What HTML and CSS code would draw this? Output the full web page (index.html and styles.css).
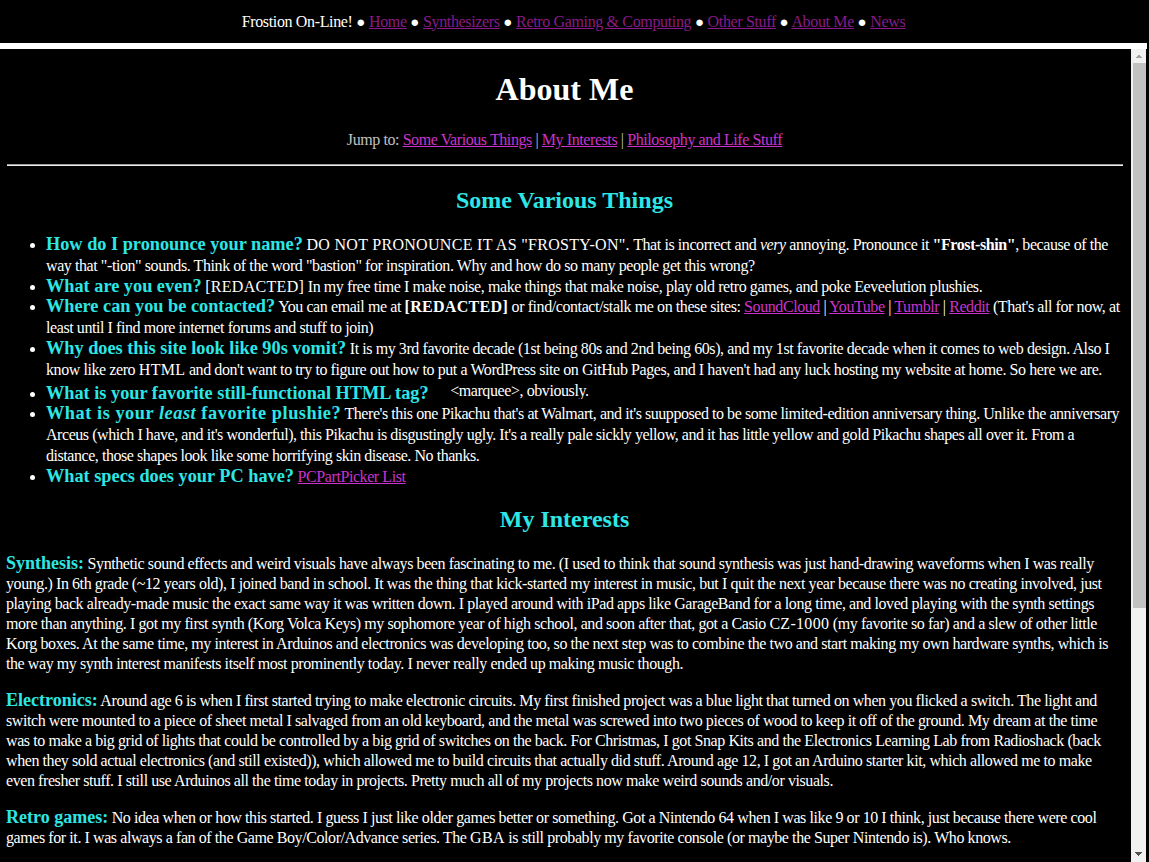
FILE: index.html
```html
<!DOCTYPE html>
<html>
<head>
<meta charset="utf-8">
<title>About Me - Frostion On-Line!</title>
<link rel="stylesheet" href="styles.css">
</head>
<body>
<div class="topbar">
  <div class="nav">Frostion On-Line! <span class="dot">●</span> <a href="#">Home</a> <span class="dot">●</span> <a href="#">Synthesizers</a> <span class="dot">●</span> <a href="#">Retro Gaming &amp; Computing</a> <span class="dot">●</span> <a href="#">Other Stuff</a> <span class="dot">●</span> <a href="#">About Me</a> <span class="dot">●</span> <a href="#">News</a></div>
</div>
<div class="frame">
  <div class="viewport">
    <div class="content">
      <h1 class="title">About Me</h1>
      <p class="jump">Jump to: <a href="#various">Some Various Things</a> | <a href="#interests">My Interests</a> | <a href="#philosophy">Philosophy and Life Stuff</a></p>
      <hr class="rule">
      <h2 class="section first" id="various">Some Various Things</h2>
      <ul class="faq">
        <li><b class="q">How do I pronounce your name?</b> <span class="caps">DO NOT PRONOUNCE IT AS "FROSTY-ON".</span> That is incorrect and <i>very</i> annoying. Pronounce it <b>"Frost-shin"</b>, because of the way that "-tion" sounds. Think of the word "bastion" for inspiration. Why and how do so many people get this wrong?</li>
        <li><b class="q">What are you even?</b> <span class="caps">[REDACTED]</span> In my free time I make noise, make things that make noise, play old retro games, and poke Eeveelution plushies.</li>
        <li><b class="q">Where can you be contacted?</b> You can email me at <b class="caps">[REDACTED]</b> or find/contact/stalk me on these sites: <a href="#">SoundCloud</a> | <a href="#">YouTube</a> | <a href="#">Tumblr</a> | <a href="#">Reddit</a> (That's all for now, at least until I find more internet forums and stuff to join)</li>
        <li><b class="q">Why does this site look like 90s vomit?</b> It is my 3rd favorite decade (1st being 80s and 2nd being 60s), and my 1st favorite decade when it comes to web design. Also I know like zero <span class="caps">HTML</span> and don't want to try to figure out how to put a WordPress site on GitHub Pages, and I haven't had any luck hosting my website at home. So here we are.</li>
        <li><b class="q">What is your favorite still-functional HTML tag?</b> <span class="marquee">&lt;marquee&gt;, obviously.</span></li>
        <li class="tight"><b class="q wide">What is your <i>least</i> favorite plushie?</b> There's this one Pikachu that's at Walmart, and it's suupposed to be some limited-edition anniversary thing. Unlike the anniversary Arceus (which I have, and it's wonderful), this Pikachu is disgustingly ugly. It's a really pale sickly yellow, and it has little yellow and gold Pikachu shapes all over it. From a distance, those shapes look like some horrifying skin disease. No thanks.</li>
        <li><b class="q">What specs does your PC have?</b> <a href="#">PCPartPicker List</a></li>
      </ul>
      <h2 class="section" id="interests">My Interests</h2>
      <p class="para"><b class="q">Synthesis:</b> Synthetic sound effects and weird visuals have always been fascinating to me. (I used to think that sound synthesis was just hand-drawing waveforms when I was really young.) In 6th grade (~12 years old), I joined band in school. It was the thing that kick-started my interest in music, but I quit the next year because there was no creating involved, just playing back already-made music the exact same way it was written down. I played around with iPad apps like GarageBand for a long time, and loved playing with the synth settings more than anything. I got my first synth (Korg Volca Keys) my sophomore year of high school, and soon after that, got a Casio <span class="caps">CZ-1000</span> (my favorite so far) and a slew of other little Korg boxes. At the same time, my interest in Arduinos and electronics was developing too, so the next step was to combine the two and start making my own hardware synths, which is the way my synth interest manifests itself most prominently today. I never really ended up making music though.</p>
      <p class="para"><b class="q">Electronics:</b> Around age 6 is when I first started trying to make electronic circuits. My first finished project was a blue light that turned on when you flicked a switch. The light and switch were mounted to a piece of sheet metal I salvaged from an old keyboard, and the metal was screwed into two pieces of wood to keep it off of the ground. My dream at the time was to make a big grid of lights that could be controlled by a big grid of switches on the back. For Christmas, I got Snap Kits and the Electronics Learning Lab from Radioshack (back when they sold actual electronics (and still existed)), which allowed me to build circuits that actually did stuff. Around age 12, I got an Arduino starter kit, which allowed me to make even fresher stuff. I still use Arduinos all the time today in projects. Pretty much all of my projects now make weird sounds and/or visuals.</p>
      <p class="para"><b class="q">Retro games:</b> No idea when or how this started. I guess I just like older games better or something. Got a Nintendo 64 when I was like 9 or 10 I think, just because there were cool games for it. I was always a fan of the Game Boy/Color/Advance series. The <span class="caps">GBA</span> is still probably my favorite console (or maybe the Super Nintendo is). Who knows.</p>
      <h2 class="section" id="philosophy">Philosophy and Life Stuff</h2>
    </div>
  </div>
  <div class="scrollbar">
    <div class="sb-btn sb-up"></div>
    <div class="sb-track"><div class="sb-thumb"></div></div>
    <div class="sb-btn sb-down"></div>
  </div>
</div>
</body>
</html>
```
FILE: styles.css
```css
html, body {
  margin: 0;
  padding: 0;
  background: #000;
  color: #fff;
  font-family: "Liberation Serif", "Times New Roman", serif;
  font-size: 16px;
  overflow: hidden;
}

.topbar {
  width: 1147px;
  height: 43px;
  display: flex;
  align-items: center;
  justify-content: center;
  border-bottom: 6px solid #fff;
}

.nav {
  letter-spacing: -0.35px;
}

.nav a {
  color: #8a1a8a;
}

.dot {
  font-size: 15px;
  letter-spacing: 0;
  color: #fff;
}

.frame {
  width: 1146px;
  height: 813px;
  display: flex;
}

.viewport {
  flex: 1;
  overflow: hidden;
}

.content {
  padding: 0 8px 0 6px;
  line-height: 20px;
  letter-spacing: -0.42px;
}

.content a {
  color: #cc33cc;
}

.caps {
  letter-spacing: 0.3px;
}

.title {
  font-size: 32px;
  line-height: 37px;
  letter-spacing: 0;
  text-align: center;
  margin: 22px 0 22px;
}

.jump {
  text-align: center;
  color: #c0c0c0;
  margin: 0 0 14px;
}

.rule {
  margin: 0 0 0 1px;
  border: 0;
  border-top: 1px solid #9a9a9a;
  border-bottom: 1px solid #eee;
}

.section {
  color: #2ee6e6;
  font-size: 24px;
  line-height: 28px;
  letter-spacing: 0;
  text-align: center;
  margin: 17px 0 20px;
}

.section.first {
  margin: 20px 0 21px;
}

.q {
  color: #2ee6e6;
  font-size: 18px;
  letter-spacing: 0;
}

.faq {
  margin: 0;
  padding-left: 40px;
}

.faq li {
  line-height: 20.8px;
}

.faq .q {
  font-size: 18.3px;
  line-height: 16px;
}

.faq .tight {
  letter-spacing: -0.45px;
}

.faq .q.wide {
  letter-spacing: 0.55px;
}

.marquee {
  display: inline-block;
  width: 660px;
  height: 18px;
  line-height: 20px;
  overflow: hidden;
  white-space: nowrap;
  padding-left: 18px;
}

.para {
  margin: 0 0 16px;
}

.scrollbar {
  width: 15px;
  background: #f1f1f1;
  display: flex;
  flex-direction: column;
}

.sb-btn {
  height: 14px;
  background-repeat: no-repeat;
  background-size: 4px 4px;
}

.sb-up {
  background-image: linear-gradient(to top left, #a3a3a3 50%, transparent 50%),
                    linear-gradient(to top right, #a3a3a3 50%, transparent 50%);
  background-position: 4px 5px, 8px 5px;
}

.sb-down {
  height: 15px;
  background-image: linear-gradient(to bottom left, #505050 50%, transparent 50%),
                    linear-gradient(to bottom right, #505050 50%, transparent 50%);
  background-position: 4px 5px, 8px 5px;
}

.sb-track {
  flex: 1;
}

.sb-thumb {
  height: 545px;
  margin-left: 2px;
  background: #c1c1c1;
}
```
